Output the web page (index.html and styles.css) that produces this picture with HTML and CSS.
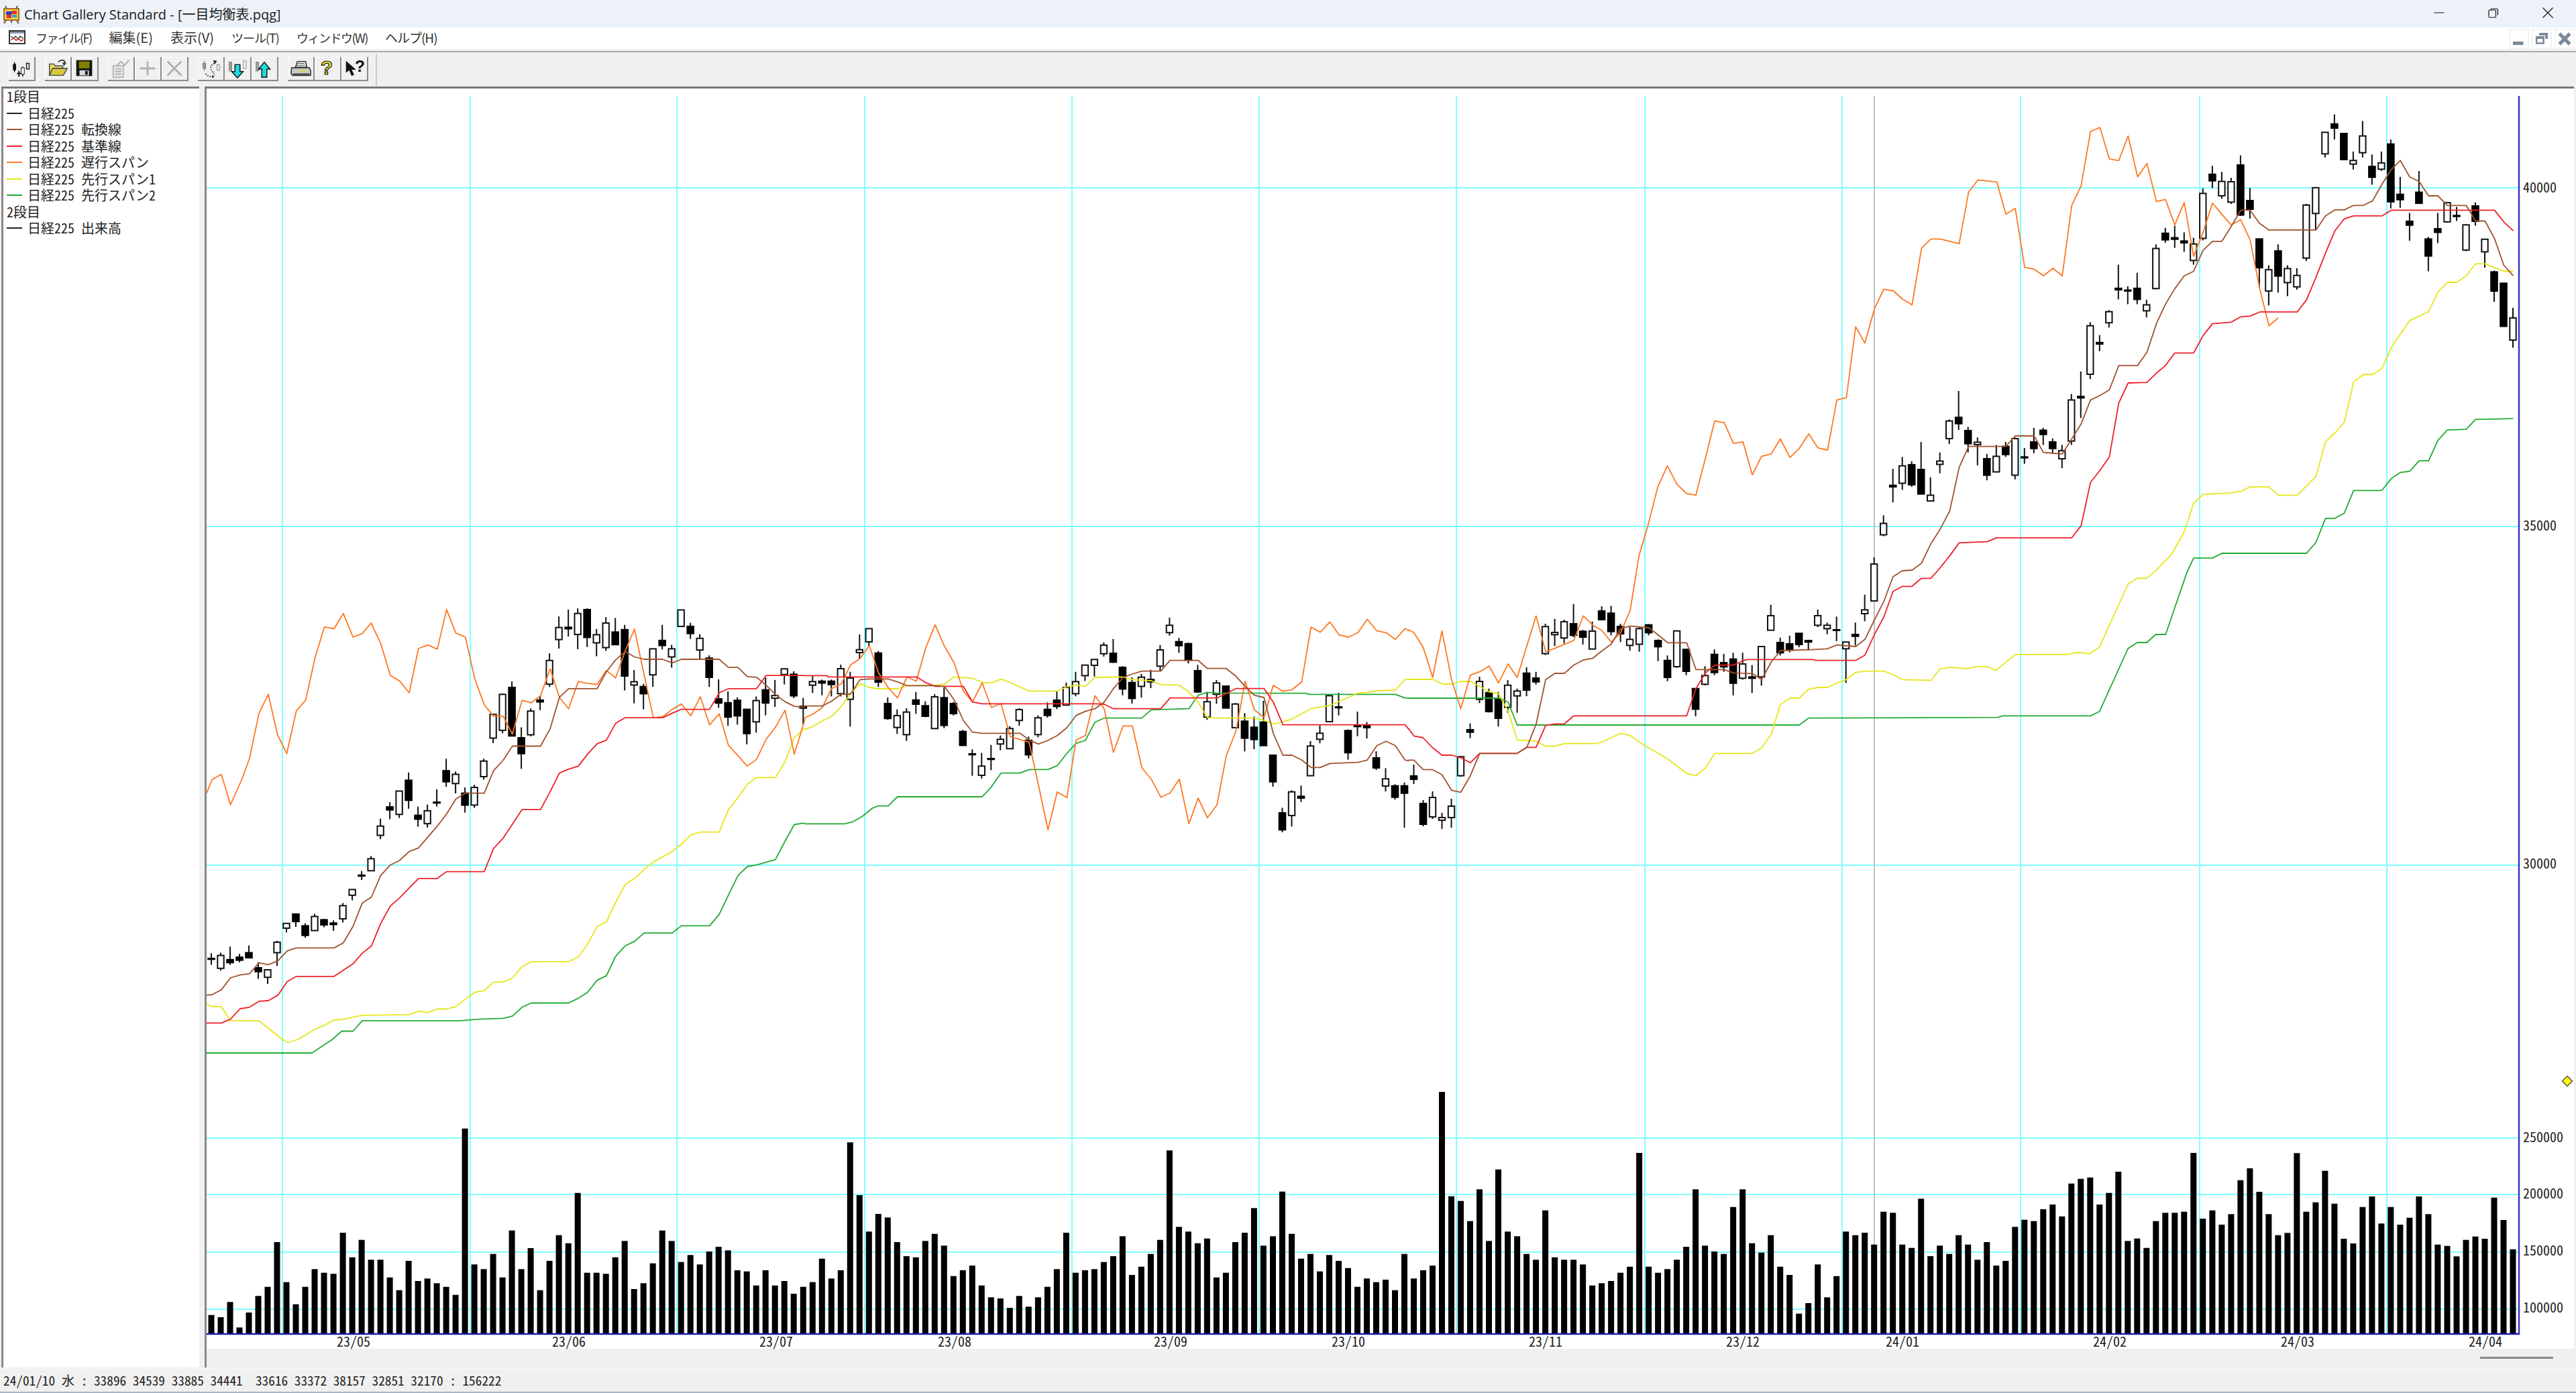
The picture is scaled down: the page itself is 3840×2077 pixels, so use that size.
FILE: index.html
```html
<!DOCTYPE html>
<html lang="ja">
<head>
<meta charset="utf-8">
<title>Chart Gallery Standard - [一目均衡表.pqg]</title>
<link rel="stylesheet" href="styles.css">
</head>
<body>
<div class="app">
  <header class="titlebar">
    <svg class="title-icon" viewBox="0 0 28 27">
      <path d="M5 1l2 4M23 1l-2 4M2 5h24M6 22l-3 5M22 22l3 5M14 22v4" stroke="#7a4a20" stroke-width="2" fill="none"/>
      <rect x="3" y="5" width="22" height="17" fill="#f4d040" stroke="#a06a30" stroke-width="2"/>
      <path d="M6 9h8v5H6z" fill="#2040d0"/><path d="M14 8h8v5h-8z" fill="#e03030"/><path d="M7 14h7v5H7z" fill="#e03030"/><path d="M15 14h7v4h-7z" fill="#30a0d0"/>
    </svg>
    <span class="title-text">Chart Gallery Standard - [一目均衡表.pqg]</span>
    <div class="win-controls">
      <svg class="win-btn" viewBox="0 0 16 16"><path d="M0.5 8h15" stroke="#111" stroke-width="1"/></svg>
      <svg class="win-btn" viewBox="0 0 16 16"><path d="M1 5.5a1.5 1.5 0 0 1 1.500-1.500h7.500a1.500 1.500 0 0 1 1.500 1.500v8a1.500 1.500 0 0 1-1.500 1.500h-7.500a1.500 1.500 0 0 1-1.500-1.500zM4 3.500a1.500 1.500 0 0 1 1.500-1.500h7.500a1.500 1.500 0 0 1 1.500 1.500v8" fill="none" stroke="#111" stroke-width="1.200"/></svg>
      <svg class="win-btn" viewBox="0 0 16 16"><path d="M0.500 0.500l15 15M15.500 0.500l-15 15" stroke="#111" stroke-width="1.200"/></svg>
    </div>
  </header>

  <nav class="menubar">
    <svg class="menu-icon" viewBox="0 0 25 21">
      <rect x="1" y="1" width="23" height="19" fill="#fff" stroke="#333" stroke-width="2"/>
      <rect x="2" y="2" width="21" height="3" fill="#8898b8"/>
      <path d="M3 9l4 3 3-3 4 4 3-4 5 3" stroke="#555" fill="none" stroke-width="1.500"/>
      <path d="M3 15l4-3 4 3 4-2 3 3 4-2" stroke="#d02020" fill="none" stroke-width="1.500"/>
    </svg>
    <span class="menu-item menu-tight">ファイル(F)</span>
    <span class="menu-item menu-kanji">編集(E)</span>
    <span class="menu-item menu-kanji">表示(V)</span>
    <span class="menu-item">ツール(T)</span>
    <span class="menu-item menu-tight">ウィンドウ(W)</span>
    <span class="menu-item menu-wide">ヘルプ(H)</span>
    <div class="mdi-controls">
      <div class="mdi-btn"><svg viewBox="0 0 20 20"><rect x="3" y="13" width="12" height="4" fill="#7d8a99"/></svg></div>
      <div class="mdi-btn"><svg viewBox="0 0 20 20"><path d="M7 3h10v7h-3v-4h-7zM3 7h10v9H3zM5 10v4h6v-4z" fill="#7d8a99" fill-rule="evenodd"/></svg></div>
      <div class="mdi-btn"><svg viewBox="0 0 20 20"><path d="M4 4l12 12M16 4l-12 12" stroke="#7d8a99" stroke-width="4"/></svg></div>
    </div>
  </nav>

  <div class="toolbar">
    <div class="tool-group">
      <button class="tool"><svg viewBox="0 0 40 36">
        <path d="M9 8v16" stroke="#111" stroke-width="1.500"/><rect x="6.500" y="11" width="5" height="10" fill="#111"/>
        <path d="M16 22v9M13 26h6" stroke="#111" stroke-width="2"/>
        <path d="M22 15v16" stroke="#111" stroke-width="1.500"/><rect x="19.500" y="17" width="5" height="10" fill="#fff" stroke="#111"/>
        <rect x="28" y="10" width="4" height="9" fill="#fff" stroke="#111" stroke-width="1.500"/>
      </svg></button>
    </div>
    <div class="tool-group">
      <button class="tool"><svg viewBox="0 0 40 36">
        <path d="M7 11h7l2 3h12v4H13L8 29H7z" fill="#e8d860" stroke="#444" stroke-width="1.500"/>
        <path d="M12 18h23l-6 11H7z" fill="#d8c840" stroke="#444" stroke-width="1.500"/>
        <path d="M21 8c3-4 8-4 10-1v3" fill="none" stroke="#333" stroke-width="2"/><path d="M27 9h7l-4 5z" fill="#333"/>
      </svg></button>
      <button class="tool"><svg viewBox="0 0 40 36">
        <rect x="7" y="5" width="25" height="25" fill="#111"/>
        <rect x="11" y="7" width="17" height="11" fill="#808000"/>
        <rect x="12" y="21" width="15" height="8" fill="#d8d8d8"/><rect x="21" y="22" width="4" height="6" fill="#111"/>
      </svg></button>
    </div>
    <div class="tool-group">
      <button class="tool"><svg viewBox="0 0 40 36">
        <path d="M8 14h16v18H8z" fill="#e8e8e8" stroke="#a8a8a8" stroke-width="1.500"/>
        <path d="M11 19h10M11 23h10M11 27h10" stroke="#a8a8a8" stroke-width="1.500"/>
        <path d="M14 14l6-7 6 6 7-8" fill="none" stroke="#b0b0b0" stroke-width="2"/>
      </svg></button>
      <button class="tool"><svg viewBox="0 0 40 36"><path d="M20 7v22M8 18h24" stroke="#b0b0b0" stroke-width="3"/></svg></button>
      <button class="tool"><svg viewBox="0 0 40 36"><path d="M9 7l22 22M31 7l-22 22" stroke="#b0b0b0" stroke-width="3"/></svg></button>
    </div>
    <div class="tool-group">
      <button class="tool"><svg viewBox="0 0 40 36">
        <rect x="8" y="10" width="4" height="8" fill="#a0a0a0" stroke="#666"/><path d="M10 6v4M10 18v4" stroke="#666"/>
        <rect x="30" y="12" width="4" height="9" fill="#eee" stroke="#888"/>
        <path d="M12 26c4 6 10 5 11 5M26 10c-6 2-8 8-3 13 2 2 3 3 2 6M26 11l-2-4" fill="none" stroke="#222" stroke-width="1.500" stroke-dasharray="2 2"/>
        <path d="M24 5l6 1-3 5zM22 29l4 1-3 4z" fill="#222"/>
      </svg></button>
      <button class="tool"><svg viewBox="0 0 40 36">
        <rect x="7" y="8" width="4" height="14" fill="#a0a0a0" stroke="#777"/>
        <rect x="29" y="6" width="5" height="12" fill="#e8e8e8" stroke="#999"/>
        <path d="M16 12h8v11h5l-9 10-9-10h5z" fill="#20d8e0" stroke="#111" stroke-width="1.500"/>
      </svg></button>
      <button class="tool"><svg viewBox="0 0 40 36">
        <rect x="7" y="8" width="4" height="14" fill="#a0a0a0" stroke="#777"/>
        <path d="M24 32h-8V19h-5l9-11 9 11h-5z" fill="#20d8e0" stroke="#111" stroke-width="1.500"/>
      </svg></button>
    </div>
    <div class="tool-group">
      <button class="tool"><svg viewBox="0 0 40 36">
        <path d="M12 16l3-9h13l2 9z" fill="#eee" stroke="#222" stroke-width="1.500"/>
        <path d="M15 10h11M14 13h13" stroke="#444"/>
        <path d="M6 17h28l2 5v7H7l-2-3z" fill="#c8c8c8" stroke="#222" stroke-width="1.500"/>
        <rect x="8" y="26" width="26" height="4" fill="#444"/><rect x="19" y="21" width="9" height="2" fill="#e0d020"/>
      </svg></button>
      <button class="tool"><svg viewBox="0 0 40 36"><text class="q-mark" x="19" y="28">?</text></svg></button>
      <button class="tool"><svg viewBox="0 0 40 36">
        <path d="M7 6v19l5-4 4 9 4-2-4-8h7z" fill="#111"/>
        <text class="q-svg" x="21" y="23">?</text>
      </svg></button>
    </div>
    <div class="toolbar-sep"></div>
  </div>

  <main class="workspace">
    <aside class="legend">
      <div class="legend-head">1段目</div>
      <div class="legend-row"><i class="swatch sw-black"></i>日経225</div>
      <div class="legend-row"><i class="swatch sw-brown"></i>日経225 転換線</div>
      <div class="legend-row"><i class="swatch sw-red"></i>日経225 基準線</div>
      <div class="legend-row"><i class="swatch sw-orange"></i>日経225 遅行スパン</div>
      <div class="legend-row"><i class="swatch sw-yellow"></i>日経225 先行スパン1</div>
      <div class="legend-row"><i class="swatch sw-green"></i>日経225 先行スパン2</div>
      <div class="legend-head">2段目</div>
      <div class="legend-row"><i class="swatch sw-black"></i>日経225 出来高</div>
    </aside>
    <section class="chart-pane">
      <svg class="chart" viewBox="308 132 3529 1879">
        <g class="grid">
          <path d="M421 143V1988M701 143V1988M1009 143V1988M1289 143V1988M1598 143V1988M1877 143V1988M2171 143V1988M2452 143V1988M2746 143V1988M3012 143V1988M3279 143V1988M3558 143V1988"/>
          <path d="M308 280H3755M308 785H3755M308 1290H3755M308 1697H3755M308 1781H3755M308 1867H3755M308 1952H3755"/>
        </g>
        <path class="cursor-line" d="M2794 143V1988"/>
        <g id="volume"></g>
        <g id="candles"></g>
        <g id="lines"></g>
        <path class="axis-v" d="M3755 143V1989"/>
        <path class="axis-h" d="M308 1989H3756"/>
        <g class="axis-text">
          <text x="3761" y="278">40000</text>
          <text x="3761" y="782">35000</text>
          <text x="3761" y="1286">30000</text>
          <text x="3761" y="1694">250000</text>
          <text x="3761" y="1778">200000</text>
          <text x="3761" y="1863">150000</text>
          <text x="3761" y="1948">100000</text>
          <text x="502" y="1999">23/05</text>
          <text x="823" y="1999">23/06</text>
          <text x="1132" y="1999">23/07</text>
          <text x="1398" y="1999">23/08</text>
          <text x="1720" y="1999">23/09</text>
          <text x="1985" y="1999">23/10</text>
          <text x="2279" y="1999">23/11</text>
          <text x="2573" y="1999">23/12</text>
          <text x="2811" y="1999">24/01</text>
          <text x="3120" y="1999">24/02</text>
          <text x="3400" y="1999">24/03</text>
          <text x="3680" y="1999">24/04</text>
        </g>
        <polygon class="marker" points="3827,1604.500 3834.500,1612 3827,1619.500 3819.500,1612"/>
      </svg>
      <div class="pane-foot"><div class="pane-thumb"></div></div>
    </section>
  </main>

  <footer class="statusbar">24/01/10 水 : 33896 34539 33885 34441  33616 33372 38157 32851 32170 : 156222</footer>
</div>
<script src="chart.js"></script>
</body>
</html>
```

FILE: styles.css
```css
* { box-sizing: border-box; }
html, body { margin: 0; padding: 0; width: 3840px; height: 2077px; overflow: hidden; background: #f0f0f0; }
.app {
  width: 3840px; height: 2077px; display: flex; flex-direction: column;
  font-family: "Noto Sans CJK JP", "Liberation Sans", sans-serif; color: #222;
}

.titlebar { height: 41px; background: #edf2f9; display: flex; align-items: center; padding-left: 3px; }
.title-icon { width: 28px; height: 27px; margin-top: 2px; }
.title-text { margin-left: 5px; font: 20px "Open Sans", "Noto Sans CJK JP", sans-serif; color: #1a1a1a; white-space: pre; }
.win-controls { margin-left: auto; display: flex; gap: 65px; padding-right: 34px; margin-top: -3px; }
.win-btn { width: 16px; height: 16px; display: block; }

.menubar {
  height: 37px; background: #fff; display: flex; align-items: center; padding-left: 13px; padding-bottom: 6px;
  border-bottom: 2px solid #aaa; box-shadow: inset 0 -3px 0 #f2f2f2; gap: 26px;
  font-size: 18px; letter-spacing: -1px;
}
.menu-icon { width: 25px; height: 21px; margin-right: -11px; }
.menu-item { white-space: pre; color: #333; }
.menu-tight { letter-spacing: -1.500px; }
.menu-kanji { font-size: 20px; letter-spacing: 0; }
.menu-wide { font-size: 19px; }
.mdi-controls { margin-left: auto; display: flex; gap: 4px; padding-right: 2px; margin-top: 4px; }
.mdi-btn { width: 30px; height: 30px; border: 2px solid #f2f2f2; background: #fff; }
.mdi-btn svg { display: block; width: 26px; height: 26px; }

.toolbar { height: 50px; background: #f0f0f0; display: flex; align-items: flex-start; padding: 7px 0 0 13px; gap: 14px; }
.tool-group { display: flex; }
.tool {
  width: 40px; height: 36px; padding: 0; background: #f0f0f0;
  border: 0; border-right: 2px solid #8a8a8a; border-bottom: 2px solid #8a8a8a;
  box-shadow: inset 1px 1px 0 #fff; display: block;
}
.tool svg { display: block; width: 38px; height: 34px; }
.toolbar-sep { width: 2px; height: 48px; margin: -5px 0 0 -3px; background: #c8c8c8; }
.q-mark { font: bold 32px "Liberation Sans", sans-serif; fill: #e6e020; stroke: #111; stroke-width: 1.200; text-anchor: middle; }
.q-svg { font: bold 26px "Liberation Sans", sans-serif; fill: #111; }

.workspace { flex: 1 1 auto; display: flex; min-height: 0; padding: 1px 0 2px 2px; }
.legend {
  width: 295px; background: #fff; border-left: 3px solid #888; border-top: 3px solid #777;
  font-size: 20px; line-height: 24.500px; font-feature-settings: "hwid"; padding-left: 5px;
}
.legend-row { display: flex; align-items: center; gap: 8px; white-space: pre; }
.swatch { display: block; width: 23px; height: 2px; }
.sw-black { background: #222; }
.sw-brown { background: #a0522d; }
.sw-red { background: #ee1c24; }
.sw-orange { background: #ff7f27; }
.sw-yellow { background: #e6e61a; }
.sw-green { background: #22aa33; }

.chart-pane { width: 3532px; margin-left: 8px; border-left: 3px solid #888; border-top: 3px solid #777; display: flex; flex-direction: column; }
.chart { width: 3529px; height: 1879px; display: block; background: #fff; flex: none; overflow: visible; }
.pane-foot { flex: 1 1 auto; display: flex; justify-content: flex-end; align-items: center; padding-right: 31px; padding-bottom: 2px; }
.pane-thumb { width: 109px; height: 3px; background: #888; }

.grid path { fill: none; stroke: #80ffff; stroke-width: 2; }
.cursor-line { fill: none; stroke: #c0c0c0; stroke-width: 2; }
.axis-v { fill: none; stroke: #3838c0; stroke-width: 2.500; }
.axis-h { fill: none; stroke: #1c1ca8; stroke-width: 2.500; }
.axis-text text {
  font: 20px/1 "Noto Sans CJK JP", sans-serif; font-feature-settings: "hwid"; fill: #222;
  dominant-baseline: central;
}
.marker { fill: #ffff00; stroke: #555; stroke-width: 1.500; }
.vol { fill: #000; }
.wick { stroke: #111; stroke-width: 2; }
.body-b { fill: #000; }
.body-w { fill: #fff; stroke: #111; stroke-width: 2; }
.series { fill: none; stroke-width: 1.800; stroke-linejoin: round; }

.statusbar {
  height: 36px; background: #f0f0f0; border-top: 1px solid #fafafa; border-bottom: 2px solid #a9b4c4;
  padding-left: 5px; font-size: 19.300px; line-height: 33px; white-space: pre; font-feature-settings: "hwid";
}
```

FILE: chart.js
```js
(function () {
  var Z = {
    a: [0, 0, 1, 1],
    z5: [300, 850, 1.742, 2.24],
    z6: [1200, 850, 1.742, 3],
    z7: [2100, 850, 1.96, 3],
    z8: [2800, 150, 1.568, 2.24],
    z11: [2430, 400, 1.889, 2.24]
  };
  var X0 = 315, DX = 14.004;

  // volume: bar tops in two sampling windows
  var vol1 = [1082,1092,1024,1138,1071,997,956,756,935,1034,956,877,893,898,714,824,746,835,835,914,971,840,930,919,940,956,992,248,856,877,809,914,704,877,783,971,840,725,761,536,893,893,898,824,751,966,940,851,704,751,845,814,856,798,777,793,882,887,950,882,950,930,987,956,935,830,919,882,310,546,709,630,646,756,819,824,751,719,772,908,882,861,950,1003,1008,1050,997,1045,1003,956,877,714,893,882,877,845,819,730,903,866,809,746,346,688,709,761,740,
    914,893,756,714,604,772,730,530,719,830,809,887,814,840,872,956,919,935,924,971,809,919,882,861,84,551,572,662,520,751,431,709,730,809,835,614,824,835,835,856,950,940,930,893,866,357,866,893,877,835,777,520,772,798,809,599,520,761,803,725,866,903,1076,1029,856,1003,908,709,725,714,767,620,625,767,782,562,819,772,809,725,767,835,756,861,840,688,656,662,609,588,641,494,473,467,588,536,441,751,740,782,662,625,625,620,357,651,614];
  var vol2 = [798,751,599,546,651,751,845,835,478,740,698,557,704,861,882,719,672,793,719,798,767,672,751,887,893,940,866,851,861,677,777,908];
  var v = '';
  vol1.concat(vol2).forEach(function (t, i) {
    var y = i < vol1.length ? 1600 + t / 3 : 1560 + t / 3;
    v += '<rect class="vol" x="' + (X0 + DX * i - 4.5).toFixed(1) + '" y="' + y.toFixed(1) + '" width="9" height="' + (1988 - y).toFixed(1) + '"/>';
  });
  document.getElementById('volume').innerHTML = v;

  // candles: [white?, high, top, bottom, low] as sampled in each window
  var C = [
    ['z5', [[0,1280,1297,1300,1318],[1,1278,1287,1330,1338],[0,1258,1301,1311,1318],[0,1282,1293,1303,1310],[0,1254,1278,1295,1295],[0,1310,1328,1341,1365],[1,1333,1335,1360,1382],[1,1238,1243,1278,1322],[1,1178,1180,1196,1210],[0,1149,1149,1174,1192],[0,1180,1188,1220,1228],[1,1148,1157,1204,1204],[0,1165,1168,1185,1193],[0,1170,1179,1184,1205],[1,1112,1121,1165,1177],[1,1066,1067,1086,1103],[0,1005,1019,1022,1035],[1,955,964,1004,1004],[1,830,855,886,899],[0,775,791,801,832],[1,737,738,816,828],[0,676,702,769,797],[0,790,819,832,857],[1,783,804,847,860],[0,732,775,778,790],[0,630,670,707,724],[1,673,682,713,746],[0,726,745,785,810],[1,717,726,785,794],[1,630,638,690,700],[1,480,482,561,578],[1,412,415,535,545],[0,372,392,554,554],[0,525,560,613,664],[1,462,471,550,555],[0,420,434,440,468],[1,278,302,381,390],[1,155,192,232,262],[0,132,191,196,222],[1,128,145,215,264],[0,128,132,225,257],[1,197,216,243,288],[1,157,177,259,270],[0,160,207,249,250],[0,183,199,354,402],[1,334,373,384,445],[0,380,389,413,465],[1,263,263,350,390],[0,183,235,252,265],[1,250,263,290,326],[1,133,133,188,188],[0,176,188,212,230],[1,214,228,267,298],[0,285,294,358,390],[0,365,430,444,460],[0,405,443,491,520],[0,425,435,487,516],[0,465,465,546,582],[1,422,436,507,543],[0,360,400,444,485],[1,367,419,428,457],[1,328,330,349,382],[0,338,348,420,428],[0,427,455,461,515]]],
    ['z6', [[1,475,499,515,550],[0,490,497,505,560],[0,490,497,512,565],[1,423,441,553,565],[1,455,483,578,700],[1,288,356,369,398],[1,262,262,321,345],[0,362,371,501,523],[0,570,597,664,670],[1,623,651,704,733],[1,618,635,736,764],[0,545,581,600,643],[0,587,607,654,658],[1,555,567,709,710],[0,525,571,695,707],[0,590,597,642,650],[0,715,722,784,785],[0,802,822,826,920],[1,818,877,918,932],[0,782,843,847,895],[1,740,757,778,806],[1,698,709,799,800],[1,618,624,673,696],[0,745,761,826,842],[1,650,661,736,748],[0,592,623,650,660],[0,543,582,610,622],[1,503,525,604,605],[1,455,499,553,565],[1,424,425,472,496],[1,398,400,426,476],[1,323,336,374,387],[0,308,372,412,415],[0,430,435,532,560],[0,480,503,574,597],[1,465,479,520,570],[0,446,489,500,528],[1,335,357,430,450],[1,213,247,280,293],[0,303,320,338,370],[0,325,329,403,418],[0,424,450,545,548],[1,545,589,658,670],[1,492,505,556,598],[0,516,519,617,617],[1,595,599,705,707],[0,640,676,752,811],[0,655,703,758,801],[0,585,680,785,785],[0,828,828,947,969],[0,1063,1086,1162,1173],[1,985,992,1098,1147],[0,964,1012,1020,1037],[1,765,787,920,920],[1,695,730,757,775],[1,558,562,678,680],[0,549,612,616,650],[0,713,718,817,848],[0,633,694,700,743],[0,680,696,705,753],[0,811,840,885,894],[1,886,934,966,990],[0,958,965,1016,1027],[0,950,965,998,1152]]],
    ['a', [[0,1140,1157,1162,1169],[0,1193,1198,1229,1232],[1,1180,1189,1218,1221],[1,1212,1219,1223,1236],[1,1191,1202,1219,1234]]],
    ['z7', [[1,832,835,920,925],[0,686,714,725,752],[1,477,498,578,595],[0,530,548,633,637],[0,545,575,663,700],[1,492,515,614,638],[1,530,541,563,638],[0,435,461,537,564],[0,455,483,500,512],[1,240,253,374,380],[1,218,279,289,340],[1,222,231,304,328],[0,152,240,292,300],[0,268,274,300,333],[1,230,273,353,355],[0,162,183,222,225],[0,160,193,275,292],[0,240,252,285,322],[1,255,310,337,360],[1,255,262,332,365],[0,242,245,280,292],[0,310,315,343,407],[0,382,404,480,497],[1,272,272,432,438],[0,352,355,453,470],[0,530,530,622,654],[1,430,472,511,516],[0,355,377,458,470],[0,375,414,433,455],[0,370,398,506,560],[1,370,420,484,490],[0,425,478,484,550],[1,340,342,478,517],[1,155,204,269,270],[0,302,324,370,382],[0,293,330,358,368],[0,282,283,333,345],[0,315,315,322,360],[1,177,204,247,255],[1,235,247,262,287],[0,208,267,270,318],[1,320,322,352,505],[0,235,288,296,337],[1,110,178,195,229]]],
    ['a', [[1,831,841,896,897]]],
    ['z8', [[1,1385,1412,1450,1455],[0,1230,1285,1290,1342],[1,1190,1220,1278,1300],[0,1205,1216,1283,1290],[0,1140,1232,1314,1315],[1,1258,1318,1337,1338],[1,1175,1204,1215,1245],[1,1065,1070,1129,1147],[0,970,1058,1079,1100],[0,1090,1102,1146,1175],[1,1125,1141,1149,1218],[0,1180,1196,1251,1268],[1,1150,1188,1240,1240],[0,1140,1155,1182,1190],[1,1125,1129,1251,1265],[0,1160,1190,1193,1213],[0,1093,1140,1162,1178],[0,1093,1101,1115,1150],[0,1128,1140,1162,1180],[1,1150,1169,1196,1228],[1,980,1000,1137,1150],[0,905,988,993,1060],[1,740,752,914,930],[0,783,808,813,837],[1,700,705,742,758],[0,548,627,632,664],[0,620,633,636,680],[0,575,627,664,680],[1,665,682,702,724],[1,480,494,628,630],[0,425,443,465,475],[0,418,458,463,492],[0,440,469,475,505],[1,458,479,534,548],[1,293,310,460,467],[0,218,246,268,292],[1,238,270,318,328],[1,258,271,339,345],[0,183,215,382,385],[0,292,334,363,394],[0,462,462,558,625],[1,550,565,636,684],[0,480,502,586,641],[1,550,561,608,653],[1,560,584,622,632],[1,345,349,526,536],[1,290,291,377,430],[1,105,106,178,190],[0,46,78,92,130],[0,108,110,197,198],[1,170,200,212,230],[1,68,118,174,190],[0,180,220,256,281],[1,170,208,229,235],[0,130,145,338,360],[0,255,313,331,358],[0,375,403,416,468],[0,235,306,343,344],[0,455,462,519,570],[0,375,428,440,476],[1,340,341,405,408],[0,355,384,387,402],[1,412,415,499,503],[0,340,352,403,418],[1,462,463,505,558],[0,568,572,636,672],[0,610,610,754,755],[1,692,726,800,825]]]
  ];
  var c = '', idx = 0;
  C.forEach(function (sec) {
    var z = Z[sec[0]];
    sec[1].forEach(function (r) {
      var cx = X0 + DX * idx, f = function (n) { return (z[1] + n / z[3]).toFixed(1); };
      var t = z[1] + r[2] / z[3], b = z[1] + r[3] / z[3];
      c += '<line class="wick" x1="' + cx.toFixed(1) + '" x2="' + cx.toFixed(1) + '" y1="' + f(r[1]) + '" y2="' + f(r[4]) + '"/>';
      if (r[0]) {
        c += '<rect class="body-w" x="' + (cx - 4.7).toFixed(1) + '" y="' + t.toFixed(1) + '" width="9.4" height="' + Math.max(b - t, 2).toFixed(1) + '"/>';
      } else {
        c += '<rect class="body-b" x="' + (cx - 5.8).toFixed(1) + '" y="' + (t - 1).toFixed(1) + '" width="11.6" height="' + Math.max(b - t + 2, 3).toFixed(1) + '"/>';
      }
      idx++;
    });
  });
  document.getElementById('candles').innerHTML = c;

  // ichimoku lines: vertices as sampled in each window
  var L = [
    ['#22aa33', [
      ['a', [307,1570,465,1570,480,1560]],
      ['z5', [340,1568,365,1540,394,1540,418,1505,673,1505,721,1500,784,1497,808,1490,833,1460,857,1446,954,1446,979,1430,1003,1410,1028,1370,1052,1355,1076,1290,1101,1255,1125,1240,1150,1212,1223,1212,1247,1188,1320,1188,1345,1150,1369,1085,1394,1020,1418,990,1442,985,1491,967,1516,905,1540,850,1565,845]],
      ['z6', [0,1135,103,1135,125,1125,150,1100,175,1065,190,1055,216,1055,240,1014,460,1014,484,970,509,908,558,908,582,892,631,892,655,875,680,820,704,775,728,762,753,680,777,662,875,662,899,625,997,620,1021,560,1045,547,1070,550,1300,551,1310,556,1533,556,1558,572,1568,573]],
      ['z7', [0,573,265,573,290,590,317,693,1141,693,1168,662]],
      ['z11', [1035,1500,1050,1495,1297,1495,1322,1480,1402,1270,1428,1250,1455,1250,1480,1223,1508,1223,1568,1015]],
      ['z8', [737,1528,781,1528,803,1512,1001,1512,1023,1475,1045,1395,1067,1395,1089,1378,1111,1302,1177,1302,1199,1262,1220,1242,1242,1238,1264,1203,1286,1203,1308,1135,1330,1100,1374,1098,1396,1065,1484,1062]]
    ]],
    ['#e6e61a', [
      ['z5', [14,1450,28,1458,52,1458,76,1505,150,1505,174,1530,211,1568,225,1578,250,1568,296,1533,320,1520,345,1503,369,1500,418,1487,540,1485,564,1473,588,1478,613,1466,637,1466,661,1458,710,1410,735,1405,759,1376,784,1376,808,1362,833,1325,857,1308,954,1308,979,1292,1003,1250,1028,1190,1052,1175,1076,1110,1101,1050,1125,1030,1150,1000,1174,975,1223,940,1247,915,1271,885,1296,875,1345,875,1369,800,1394,760,1418,715,1442,693,1491,693,1516,640,1540,560,1565,530]],
      ['z6', [0,712,20,700,45,675,69,655,94,610,118,555,143,508,167,525,191,531,240,531,265,517,338,515,362,510,387,478,435,484,460,503,484,505,509,488,533,503,582,541,655,541,680,522,704,515,728,520,753,480,826,478,850,490,899,495,924,512,972,515,997,545,1021,590,1045,660,1070,662,1167,662,1192,672,1216,688,1241,680,1265,665,1314,620,1363,605,1411,570,1436,550,1460,547,1485,540,1533,537,1558,490,1568,488]],
      ['z7', [0,489,70,489,100,510,125,510,152,498,180,498,207,520,235,545,262,552,290,630,317,760,372,765,400,788,427,788,455,776,547,776,564,770,619,730,647,740,690,785,757,845,812,910,839,920,867,885,894,820,1004,820,1031,795,1059,735,1086,600,1114,573,1141,573,1168,533,1196,525,1223,525,1251,505,1278,490,1306,458,1333,452,1388,452,1415,468,1442,490,1525,493]],
      ['z11', [847,1377,873,1338,900,1333,950,1337,975,1330,1005,1330,1030,1343,1085,1290,1228,1290,1260,1283,1295,1287,1322,1265,1402,1055,1428,1035,1455,1035,1480,1010,1525,955]],
      ['z8', [715,1440,737,1345,759,1315,825,1310,847,1305,869,1290,913,1290,935,1318,979,1318,1023,1255,1045,1140,1067,1110,1089,1075,1111,940,1133,915,1155,915,1177,895,1199,825,1220,780,1242,735,1286,705,1308,640,1330,607,1352,607,1374,585,1396,545,1418,545,1462,570,1484,570]]
    ]],
    ['#ff7722', [
      ['z5', [14,745,28,700,52,682,76,784,105,700,125,630,150,478,174,415,198,550,222,613,247,470,271,435,296,290,320,190,345,196,369,145,394,224,418,212,441,177,466,245,491,352,515,370,540,410,564,262,588,250,613,264,637,132,661,210,686,224,710,362,735,450,759,488,784,488,808,548,833,435,857,443,881,420,906,330,930,425,954,463,979,372,1003,378,1028,382,1052,335,1076,360,1101,270,1125,197,1150,350,1174,493,1198,490,1223,465,1247,447,1271,487,1296,423,1320,517,1345,480,1369,585,1394,620,1418,655,1442,632,1467,565,1491,525,1516,468,1540,615,1565,510]],
      ['z6', [0,660,20,645,45,615,69,530,94,510,118,425,143,395,167,338,191,460,216,525,240,572,265,478,289,497,313,350,338,245,362,340,387,415,411,540,435,590,460,505,484,615,509,597,533,745,558,758,582,770,606,960,631,1162,655,992,680,1018,704,760,728,740,753,562,777,620,801,815,826,697,850,697,875,885,899,935,924,1016,948,997,972,935,997,1135,1021,1020,1045,1108,1070,1050,1094,830,1119,720,1143,498,1167,625,1192,660,1216,515,1241,542,1265,535,1290,500,1314,255,1338,278,1363,232,1387,290,1411,300,1436,280,1460,220,1485,272,1509,280,1533,310,1558,262,1568,270]],
      ['z7', [0,268,15,280,42,345,70,480,97,272,125,490,152,620,180,470,207,455,235,430,262,505,290,420,317,480,345,340,372,205,400,365,427,350,455,332,482,315,510,205,537,245,564,270,592,322,619,280,647,180]],
      ['z11', [25,960,50,860,78,730,105,660,131,720,158,752,185,758,212,635,238,510,265,516,291,585,318,580,344,690,370,628,397,620,423,570,450,632,476,602,503,553,529,600,556,607,582,440,609,432,635,195,661,250,688,135,714,70,741,75,767,103,794,122]],
      ['z8', [101,493,123,462,145,462,189,478,211,305,233,265,277,272,298,380,320,360,342,557,364,563,386,585,408,560,430,585,452,350,474,285,496,103,518,90,540,195,562,200,584,118,606,255,628,210,650,337,671,330,693,415,715,340,737,520,759,440,781,342,803,380,825,415,847,398,869,465,891,625,913,752,935,725]]
    ]],
    ['#ee2028', [
      ['z5', [14,1513,52,1513,76,1500,101,1465,125,1460,150,1440,174,1438,199,1420,223,1375,247,1357,345,1357,394,1315,418,1280,442,1255,466,1180,491,1122,515,1095,564,1030,613,1030,637,1007,735,1007,759,930,784,895,833,800,881,800,906,740,930,678,954,665,979,655,1003,615,1028,580,1052,568,1076,512,1101,493,1198,493,1223,478,1247,465,1320,465,1345,410,1369,396,1442,396,1467,352,1565,352]],
      ['z6', [0,472,58,472,60,478,290,478,313,503,338,520,411,520,435,590,460,598,753,598,777,600,801,620,924,620,948,572,1070,572,1094,552,1119,530,1192,530,1216,590,1241,692,1558,692,1568,712]],
      ['z7', [0,710,15,742,42,750,70,795,97,828,125,828,152,840,180,862,207,820,317,820,345,793,372,793,400,695,427,688,455,688,482,652,812,652,839,530,867,460,894,425,949,425,976,405,990,400,1180,400,1190,404,1306,404,1333,380,1360,290,1388,210,1415,95,1442,73,1470,73,1498,37,1525,37]],
      ['z8', [140,1568,167,1520,189,1477,255,1473,276,1460,452,1460,474,1420,496,1275,518,1235,540,1190,562,1010,584,943,628,941,650,910,671,885,693,843,737,843,759,785,781,745,825,740,847,722,869,720,891,706,979,706,1001,665,1023,590,1045,510,1067,435,1089,395,1111,385,1177,385,1199,366,1440,366,1462,405,1484,435]]
    ]],
    ['#a0522d', [
      ['z5', [14,1420,28,1418,52,1402,76,1362,101,1352,125,1348,150,1312,174,1318,199,1305,223,1272,247,1262,345,1262,369,1245,394,1190,418,1112,442,1092,466,1020,491,985,515,970,540,940,564,928,613,855,637,815,661,765,686,745,735,745,759,670,784,635,808,588,881,588,906,530,930,425,954,396,1028,396,1052,340,1076,300,1101,272,1125,290,1150,298,1198,298,1223,310,1247,298,1345,298,1369,325,1394,325,1418,356,1442,358,1467,385,1491,415,1516,440,1540,455,1565,458]],
      ['z6', [0,608,45,608,70,585,94,555,118,555,143,490,167,487,216,487,240,500,265,517,338,517,362,520,387,580,411,672,435,725,460,730,558,730,582,760,606,778,631,762,655,740,680,705,704,650,728,632,753,620,777,590,801,530,826,480,850,465,875,452,924,452,948,404,1021,404,1045,440,1094,440,1119,475,1143,520,1167,560,1192,570,1216,730,1241,828,1265,828,1290,850,1314,883,1338,883,1363,865,1436,860,1460,850,1485,785,1509,766,1533,785,1558,850,1568,852]],
      ['z7', [0,850,15,850,42,892,70,893,97,915,125,985,152,994,180,920,207,820,317,820,345,793,372,690,400,490,427,462,455,462,482,425,510,402,537,395,564,362,592,330,619,262,647,250,702,258,729,290,757,325,812,325,839,445,921,445,949,460,1004,463,1031,490,1059,412,1086,360,1178,356,1223,352,1251,335,1306,342,1333,310,1360,225,1388,140,1415,30,1442,3]],
      ['z8', [79,1568,101,1545,123,1480,145,1430,167,1370,189,1225,211,1155,298,1155,320,1120,364,1120,386,1175,430,1180,452,1130,474,1080,496,1000,518,985,540,966,562,885,606,885,628,840,650,745,671,680,693,628,715,585,737,570,759,500,781,470,803,470,825,420,847,366,869,366,891,410,913,432,1023,432,1045,385,1067,365,1089,365,1111,350,1133,350,1155,335,1177,280,1199,230,1220,200,1242,255,1264,270,1286,318,1308,318,1330,350,1374,350,1396,402,1418,402,1440,460,1462,550,1484,585]]
    ]]
  ];
  var l = '';
  L.forEach(function (s) {
    var pts = [];
    s[1].forEach(function (seg) {
      var z = Z[seg[0]], a = seg[1];
      for (var i = 0; i < a.length; i += 2) {
        pts.push((z[0] + a[i] / z[2]).toFixed(1) + ',' + (z[1] + a[i + 1] / z[3]).toFixed(1));
      }
    });
    l += '<polyline class="series" stroke="' + s[0] + '" points="' + pts.join(' ') + '"/>';
  });
  document.getElementById('lines').innerHTML = l;
})();
```
